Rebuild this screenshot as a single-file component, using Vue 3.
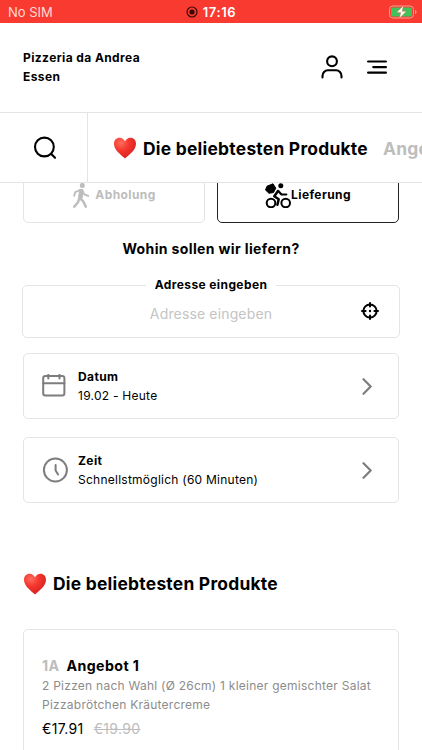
<script setup>
import { ref } from 'vue'

// delivery type, pickup or delivery
const mode = ref('lieferung')

const categories = ref([
  { id: 1, name: 'Die beliebtesten Produkte', heart: true },
  { id: 2, name: 'Angebote', heart: false },
])
const active = ref(1)

const address = ref('')

const options = ref([
  { id: 'date', label: 'Datum', value: '19.02 - Heute' },
  { id: 'time', label: 'Zeit', value: 'Schnellstmöglich (60 Minuten)' },
])

const products = ref([
  {
    nr: '1A',
    name: 'Angebot 1',
    text: '2 Pizzen nach Wahl (Ø 26cm) 1 kleiner gemischter Salat Pizzabrötchen Kräutercreme',
    price: '€17.91',
    oldPrice: '€19.90',
  },
])
</script>

<template>
  <div class="screen">
    <div class="status">
      <span class="carrier">No SIM</span>
      <span class="clock">
        <svg width="12" height="12" viewBox="0 0 12 12">
          <circle cx="6" cy="6" r="5" fill="none" stroke="#3a0806" stroke-width="1.2" />
          <circle cx="6" cy="6" r="2.6" fill="#3a0806" />
        </svg>
        <span>17:16</span>
      </span>
      <svg class="battery" width="28" height="14" viewBox="0 0 28 14">
        <rect x="0.5" y="1" width="24" height="12" rx="3.4" fill="none" stroke="#fb9d92" />
        <rect x="2" y="2.5" width="21" height="9" rx="2" fill="#3fc35a" />
        <path d="M26 5v4c1-.3 1.5-1 1.5-2S27 5.300 26 5z" fill="#fb9d92" />
        <path d="M14.600 0.500 7.500 7.600h4.300L10.200 13.500l7.200-7.200h-4.300z" fill="#fff" stroke="#e8503c" stroke-width="0.4" />
      </svg>
    </div>

    <header class="header">
      <div class="shop">Pizzeria da Andrea<br />Essen</div>
      <div class="actions">
        <svg width="22" height="24" viewBox="0 0 22 24" fill="none" stroke="#000" stroke-width="2.100" stroke-linecap="round">
          <circle cx="11" cy="6.300" r="4.900" />
          <path d="M1.500 22.500v-1.500a5.500 5.500 0 0 1 5.500-5.700h8a5.500 5.500 0 0 1 5.500 5.700v1.500" />
        </svg>
        <svg width="20" height="14" viewBox="0 0 20 14" fill="none" stroke="#000" stroke-width="2.200" stroke-linecap="round">
          <path d="M1.100 1.500h17.800M6.300 7.200h12.600M1.100 12.700h17.800" />
        </svg>
      </div>
    </header>

    <nav class="nav">
      <button class="search">
        <svg width="24" height="24" viewBox="0 0 24 24" fill="none" stroke="#000" stroke-width="2.100" stroke-linecap="round">
          <circle cx="11.400" cy="11" r="9.400" />
          <path d="M18 17.800l4 4" />
        </svg>
      </button>
      <div class="cats">
        <a v-for="c in categories" :key="c.id" class="cat" :class="{ active: c.id === active }" @click="active = c.id">
          <svg v-if="c.heart" class="heart" width="24" height="22" viewBox="0 0 24 22">
            <defs>
              <radialGradient id="heartNav" cx="0.32" cy="0.25" r="0.8">
                <stop offset="0" stop-color="#ff6d5c" />
                <stop offset="0.45" stop-color="#f5372f" />
                <stop offset="1" stop-color="#d3201f" />
              </radialGradient>
            </defs>
            <path d="M12 21.500C9 18.500 1 13.500 1 6.700 1 3 3.500.7 6.500.7c2.400 0 4.500 1.400 5.500 3.900C13 2.100 15.100.7 17.500.7c3 0 5.500 2.300 5.500 6 0 6.800-8 11.800-11 14.800z" fill="url(#heartNav)" />
          </svg>
          <span>{{ c.name }}</span>
        </a>
      </div>
    </nav>

    <main class="content">
      <div class="modes">
        <button class="mode" :class="{ on: mode === 'abholung' }" @click="mode = 'abholung'">
          <svg width="18" height="26" viewBox="0 -0.8 18 26">
            <circle cx="10.300" cy="2.600" r="2.500" fill="currentColor" />
            <path d="M8.600 7.500 7.300 14.800 11.200 18.500 13.800 23.800M7.300 15.500 6 19.500 2.300 23.800" fill="none" stroke="currentColor" stroke-width="2.500" stroke-linecap="round" stroke-linejoin="round" />
            <path d="M8 7.200 3.300 9.300 2.200 13M10.300 8l2 3.500 3.900 1.600" fill="none" stroke="currentColor" stroke-width="1.900" stroke-linecap="round" stroke-linejoin="round" />
            <path d="M7.200 6.200h3.600l1 2.300-1.300 7.500-4-1z" fill="currentColor" />
          </svg>
          <span class="gap">Abholung</span>
        </button>
        <button class="mode" :class="{ on: mode === 'lieferung' }" @click="mode = 'lieferung'">
          <svg width="26" height="26" viewBox="0 -1 26 26">
            <path d="M2 3.200 8 .8l2.800 4.400L8.500 9.500 4 10.300.5 7z" fill="currentColor" stroke="currentColor" stroke-linejoin="round" />
            <circle cx="15.800" cy="2.800" r="2.500" fill="currentColor" />
            <g fill="none" stroke="currentColor" stroke-linecap="round" stroke-linejoin="round">
              <circle cx="6" cy="20" r="4.300" stroke-width="2" />
              <circle cx="20.700" cy="20" r="4.300" stroke-width="2" />
              <path d="M13 8 9.300 13.200l4.400 3-1.300 5.600" stroke-width="2.500" />
              <path d="M13.200 8 16.500 11.500h4.800" stroke-width="2.200" />
            </g>
          </svg>
          <span>Lieferung</span>
        </button>
      </div>

      <h3 class="question">Wohin sollen wir liefern?</h3>

      <fieldset class="address">
        <legend>Adresse eingeben</legend>
        <input v-model="address" placeholder="Adresse eingeben" />
        <svg class="locate" width="18" height="18" viewBox="0 0 18 18" fill="none" stroke="#000" stroke-width="2" stroke-linecap="round">
          <circle cx="9" cy="9" r="6.600" />
          <path d="M9 1v3.600M9 13.400V17M1 9h3.600M13.400 9H17" />
          <circle cx="9" cy="9" r="1.200" fill="#000" stroke="none" />
        </svg>
      </fieldset>

      <div v-for="o in options" :key="o.id" class="option">
        <span class="icon">
          <svg v-if="o.id === 'date'" width="24" height="24" viewBox="0 0 24 24" fill="none" stroke="#7d7d7d" stroke-width="2" stroke-linecap="round">
            <rect x="1.200" y="3.400" width="21.200" height="19.500" rx="2.200" transform="translate(0 -1.500)" />
            <path d="M1.200 9.200h21.200M6.300 0.800v3.700M17.500 0.800v3.700" />
          </svg>
          <svg v-else width="26" height="26" viewBox="0 0 26 26" fill="none" stroke="#7d7d7d" stroke-width="2" stroke-linecap="round" stroke-linejoin="round">
            <circle cx="13.400" cy="13" r="11.500" />
            <path d="M13.600 8v5.500l2.500 4" />
          </svg>
        </span>
        <div class="texts">
          <b>{{ o.label }}</b>
          <span>{{ o.value }}</span>
        </div>
        <svg width="10" height="17" viewBox="0 0 10 17" fill="none" stroke="#7d7d7d" stroke-width="2.200" stroke-linecap="round" stroke-linejoin="round">
          <path d="M1.500 1.200 8.700 8.500 1.500 15.800" />
        </svg>
      </div>

      <h2 class="title">
        <svg class="heart" width="24" height="22" viewBox="0 0 24 22">
          <defs>
            <radialGradient id="heartTitle" cx="0.32" cy="0.25" r="0.8">
              <stop offset="0" stop-color="#ff6d5c" />
              <stop offset="0.45" stop-color="#f5372f" />
              <stop offset="1" stop-color="#d3201f" />
            </radialGradient>
          </defs>
          <path d="M12 21.500C9 18.500 1 13.500 1 6.700 1 3 3.500.7 6.500.7c2.400 0 4.500 1.400 5.500 3.900C13 2.100 15.100.7 17.500.7c3 0 5.500 2.300 5.500 6 0 6.800-8 11.800-11 14.800z" fill="url(#heartTitle)" />
        </svg>
        <span>Die beliebtesten Produkte</span>
      </h2>

      <div v-for="p in products" :key="p.nr" class="product">
        <div class="name"><span>{{ p.nr }}</span>{{ p.name }}</div>
        <p>{{ p.text }}</p>
        <div class="price">{{ p.price }}<s>{{ p.oldPrice }}</s></div>
      </div>
    </main>
  </div>
</template>

<style>
body {
  margin: 0;
  background: #fff;
}
</style>

<style scoped>
* {
  box-sizing: border-box;
}

.screen {
  display: flex;
  flex-direction: column;
  width: 422px;
  height: 750px;
  overflow: hidden;
  font-family: Inter, "Liberation Sans", sans-serif;
  font-size: 12px;
  letter-spacing: 0.25px;
  color: #000;
  background: #fff;
}

svg {
  display: block;
  flex-shrink: 0;
}

button {
  padding: 0;
  border: 0;
  background: none;
  font: inherit;
  letter-spacing: inherit;
}

.status {
  flex: none;
  display: grid;
  grid-template-columns: 1fr auto 1fr;
  align-items: center;
  height: 23px;
  padding: 0 5px 0 8px;
  background: #f93a30;
  color: #fff;
  font-size: 13px;
  letter-spacing: 0;
}

.carrier {
  color: #ffdad6;
}

.clock {
  display: flex;
  align-items: center;
  gap: 5px;
  margin-left: -3px;
  font-weight: 600;
  letter-spacing: 0.6px;
}

.battery {
  justify-self: end;
}

.header {
  flex: none;
  display: flex;
  justify-content: space-between;
  height: 89px;
  padding: 25px 35px 0 23px;
}

.shop {
  font-weight: 700;
  line-height: 19px;
  letter-spacing: 0.4px;
}

.actions {
  display: flex;
  align-items: center;
  gap: 24px;
  height: 38px;
}

.nav {
  flex: none;
  display: flex;
  height: 71px;
  border-top: 1px solid #e4e4e4;
  border-bottom: 1px solid #e4e4e4;
}

.search {
  display: flex;
  align-items: center;
  justify-content: center;
  width: 88px;
  padding-left: 2px;
  border-right: 1px solid #e4e4e4;
}

.cats {
  flex: 1;
  display: flex;
  align-items: center;
  gap: 15px;
  padding: 1px 0 0 25px;
  overflow: hidden;
  white-space: nowrap;
  font-size: 17.4px;
  font-weight: 700;
}

.cat {
  display: flex;
  align-items: center;
  gap: 6px;
  color: #bdbdbd;
}

.cat.active {
  color: #000;
}

.content {
  flex: 1;
  overflow: hidden;
  padding: 0 23px;
}

/* scrolled a bit under the nav */
.modes {
  display: flex;
  gap: 12px;
  margin-top: -17px;
}

.mode {
  flex: 1;
  display: flex;
  align-items: center;
  justify-content: center;
  height: 57px;
  border: 1px solid #e4e4e4;
  border-radius: 5px;
  color: #bdbdbd;
  font-weight: 700;
  letter-spacing: 0.4px;
}

.mode.on {
  border-color: #222;
  color: #000;
}

.gap {
  margin-left: 5px;
}

.question {
  margin: 16px 0 0;
  font-size: 14px;
  line-height: 20px;
  font-weight: 700;
  text-align: center;
  letter-spacing: 0.37px;
}

.address {
  display: flex;
  align-items: center;
  height: 61px;
  margin: 18px -1px 0;
  padding: 0 20px 8px;
  border: 1px solid #e4e4e4;
  border-radius: 5px;
}

.address legend {
  margin: 0 auto;
  padding: 0 9px;
  font-weight: 700;
  line-height: 16px;
  letter-spacing: 0.4px;
}

.address input {
  flex: 1;
  min-width: 0;
  padding: 5px 0 0 18px;
  border: 0;
  outline: none;
  background: none;
  font: inherit;
  font-size: 14px;
  text-align: center;
  letter-spacing: 0.15px;
}

.address input::placeholder {
  color: #c4c4c4;
}

.option {
  display: flex;
  align-items: center;
  height: 66px;
  margin-top: 18px;
  padding: 0 26px 0 18px;
  border: 1px solid #e4e4e4;
  border-radius: 5px;
}

.address + .option {
  margin-top: 15px;
}

.icon {
  width: 36px;
}

.texts {
  flex: 1;
  display: flex;
  flex-direction: column;
  line-height: 19px;
}

.texts b {
  font-weight: 700;
  letter-spacing: 0.4px;
}

.title {
  display: flex;
  align-items: center;
  gap: 6px;
  margin: 68px 0 0;
  font-size: 17.4px;
  line-height: 26px;
  font-weight: 700;
}

.product {
  height: 180px;
  margin-top: 32px;
  padding: 26px 18px 0;
  border: 1px solid #e4e4e4;
  border-radius: 5px;
}

.name {
  font-size: 14.2px;
  font-weight: 700;
  line-height: 20px;
  letter-spacing: 0.4px;
}

.name span {
  margin-right: 7px;
  color: #bdbdbd;
}

.product p {
  margin: 0;
  color: #8c8c8c;
  line-height: 19px;
}

.price {
  margin-top: 5px;
  font-size: 14px;
  line-height: 20px;
  letter-spacing: 0.35px;
}

.price s {
  margin-left: 10px;
  color: #bdbdbd;
}
</style>
